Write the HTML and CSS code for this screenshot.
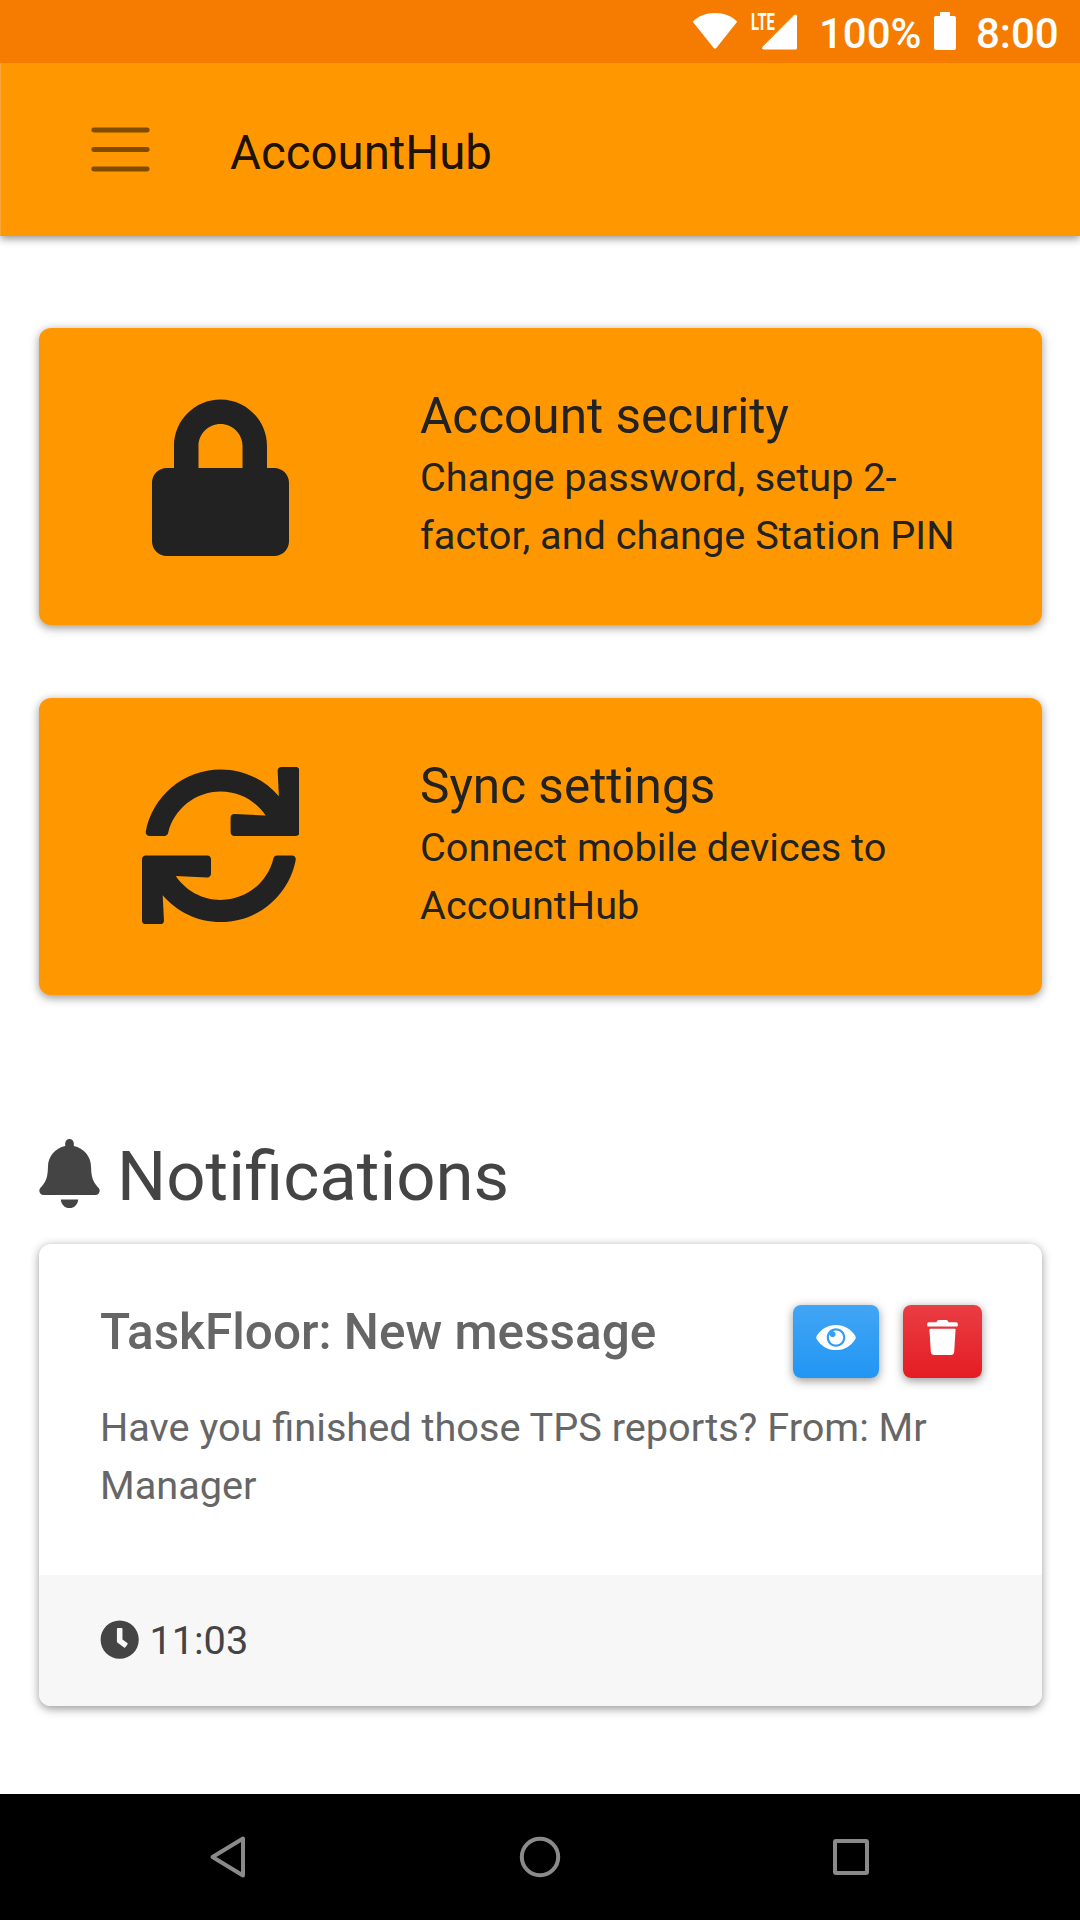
FILE: index.html
```html
<!DOCTYPE html>
<html lang="en">
<head>
<meta charset="UTF-8">
<meta name="viewport" content="width=device-width, initial-scale=1.0">
<title>AccountHub</title>
<link rel="stylesheet" href="styles.css">
</head>
<body>

<div class="statusbar">
  <svg class="wifi" viewBox="0 0 46 36"><path d="M.8 8.800C6 3 14 0 23 0s17 3 22.200 8.800L24.300 35q-1.300 1.500-2.600 0z"/></svg>
  <svg class="signal" viewBox="0 0 46 43">
    <text x="0" y="23" textLength="24" lengthAdjust="spacingAndGlyphs">LTE</text>
    <path d="M13 42.500q-3.200-.4-1.200-3L43 8.200q2.600-1.700 3 1V41q0 1.500-1.500 1.500z"/>
  </svg>
  <span class="percent">100%</span>
  <svg class="battery" viewBox="0 0 22 38"><path d="M6 0h10v4h4q2 0 2 2v30q0 2-2 2H2q-2 0-2-2V6q0-2 2-2h4z"/></svg>
  <span class="clock">8:00</span>
</div>

<nav class="navbar">
  <svg class="toggler" viewBox="0 0 30 30"><path d="M4 7h22M4 15h22M4 23h22"/></svg>
  <span class="brand">AccountHub</span>
</nav>

<main class="content">
  <a class="tile">
    <div class="tile-icon">
      <svg class="lock" viewBox="0 0 448 512"><path d="M400 224h-24v-72C376 68.200 307.800 0 224 0S72 68.200 72 152v72H48c-26.500 0-48 21.500-48 48v192c0 26.500 21.500 48 48 48h352c26.500 0 48-21.500 48-48V272c0-26.500-21.500-48-48-48zm-104 0H152v-72c0-39.700 32.300-72 72-72s72 32.300 72 72v72z"/></svg>
    </div>
    <div class="tile-text">
      <h4>Account security</h4>
      <p>Change password, setup 2-factor, and change Station PIN</p>
    </div>
  </a>

  <a class="tile">
    <div class="tile-icon">
      <svg class="sync" viewBox="0 0 512 512"><path d="M440.935 12.574l3.966 82.766C399.416 41.904 331.674 8 256 8 134.813 8 33.933 94.924 12.296 209.824 10.908 217.193 16.604 224 24.103 224h49.084c5.570 0 10.377-3.842 11.676-9.259C103.407 137.408 172.931 80 256 80c60.893 0 114.512 30.856 146.104 77.801l-101.530-4.865c-6.845-.328-12.574 5.133-12.574 11.986v47.411c0 6.627 5.373 12 12 12h200.333c6.627 0 12-5.373 12-12V12c0-6.627-5.373-12-12-12h-47.411c-6.853 0-12.315 5.729-11.987 12.574zM256 432c-60.895 0-114.517-30.858-146.109-77.805l101.868 4.871c6.845.327 12.573-5.134 12.573-11.986v-47.412c0-6.627-5.373-12-12-12H12c-6.627 0-12 5.373-12 12V500c0 6.627 5.373 12 12 12h47.385c6.863 0 12.328-5.745 11.985-12.599l-4.129-82.575C112.725 470.166 180.405 504 256 504c121.187 0 222.067-86.924 243.704-201.824 1.388-7.369-4.308-14.176-11.807-14.176h-49.084c-5.570 0-10.377 3.842-11.676 9.259C408.593 374.592 339.069 432 256 432z"/></svg>
    </div>
    <div class="tile-text">
      <h4>Sync settings</h4>
      <p>Connect mobile devices to AccountHub</p>
    </div>
  </a>

  <h2 class="heading">
    <svg class="bell" viewBox="0 0 448 512"><path d="M224 512c35.320 0 63.970-28.650 63.970-64H160.030c0 35.350 28.650 64 63.970 64zm215.390-149.710c-19.320-20.760-55.470-51.990-55.470-154.290 0-77.700-54.480-139.900-127.940-155.160V32c0-17.670-14.320-32-31.980-32s-31.980 14.330-31.980 32v20.840C118.560 68.100 64.080 130.300 64.080 208c0 102.300-36.150 133.530-55.470 154.290-6 6.450-8.660 14.160-8.610 21.710.11 16.400 12.980 32 32.100 32h383.800c19.120 0 32-15.600 32.100-32 .05-7.550-2.610-15.270-8.610-21.710z"/></svg>
    <span>Notifications</span>
  </h2>

  <div class="card">
    <div class="card-body">
      <div class="card-top">
        <h5>TaskFloor: New message</h5>
        <div class="buttons">
          <button class="btn btn-info"><svg class="eye" viewBox="0 0 576 512"><path d="M569.354 231.631C512.969 135.949 407.810 72 288 72 168.140 72 63.004 135.994 6.646 231.631a47.999 47.999 0 0 0 0 48.739C63.031 376.051 168.190 440 288 440c119.860 0 224.996-63.994 281.354-159.631a47.997 47.997 0 0 0 0-48.738zM288 392c-75.162 0-136-60.827-136-136 0-75.162 60.826-136 136-136 75.162 0 136 60.826 136 136 0 75.162-60.826 136-136 136zm104-136c0 57.438-46.562 104-104 104s-104-46.562-104-104c0-17.708 4.431-34.379 12.236-48.973l-.001.032c0 23.651 19.173 42.823 42.824 42.823s42.824-19.173 42.824-42.823c0-23.651-19.173-42.824-42.824-42.824l-.032.001C253.621 156.431 270.292 152 288 152c57.438 0 104 46.562 104 104z"/></svg></button>
          <button class="btn btn-danger"><svg class="trash" viewBox="0 0 448 512"><path d="M0 84V56c0-13.300 10.700-24 24-24h112l9.400-18.700c4-8.200 12.300-13.300 21.400-13.300h114.300c9.100 0 17.400 5.100 21.500 13.300L312 32h112c13.300 0 24 10.700 24 24v28c0 6.600-5.400 12-12 12H12C5.400 96 0 90.600 0 84zm415.200 56.700L394.800 467c-1.600 25.300-22.600 45-47.900 45H101.100c-25.300 0-46.300-19.700-47.900-45L32.800 140.700C32.400 133.800 37.900 128 44.800 128h358.500c6.800 0 12.300 5.800 11.900 12.700z"/></svg></button>
        </div>
      </div>
      <p class="card-text">Have you finished those TPS reports? From: Mr Manager</p>
    </div>
    <div class="card-footer">
      <svg class="time" viewBox="0 0 512 512"><path d="M256 8C119 8 8 119 8 256s111 248 248 248 248-111 248-248S393 8 256 8zm57.100 350.100L224.900 294c-3.100-2.300-4.900-5.900-4.900-9.700V116c0-6.600 5.400-12 12-12h48c6.600 0 12 5.400 12 12v137.700l63.500 46.200c5.400 3.900 6.500 11.400 2.600 16.800l-28.200 38.800c-3.900 5.300-11.400 6.500-16.800 2.600z"/></svg>
      <span>11:03</span>
    </div>
  </div>
</main>

<footer class="softkeys">
  <svg viewBox="0 0 48 48"><path d="M38 5.500v37L7.500 24z"/></svg>
  <svg viewBox="0 0 48 48"><circle cx="24" cy="24" r="18.200"/></svg>
  <svg viewBox="0 0 48 48"><rect x="8" y="8" width="32" height="32" rx="1"/></svg>
</footer>

</body>
</html>
```
FILE: styles.css
```css
* {
  box-sizing: border-box;
}
body {
  margin: 0;
  width: 1080px;
  height: 1920px;
  display: flex;
  flex-direction: column;
  overflow: hidden;
  background: #fff;
  color: #444;
  font-family: Roboto, sans-serif;
  font-size: 39.700px;
  line-height: 58px;
}
h2, h4, h5, p {
  margin: 0;
  font-weight: 400;
}
svg {
  display: block;
  flex: none;
  fill: currentColor;
}

/* Android status bar */
.statusbar {
  position: relative;
  z-index: 1; /* keeps the app bar's shadow off it */
  flex: none;
  display: flex;
  height: 63px;
  padding-left: 692px;
  background: #f57c00;
  color: #fff;
  font-size: 42px;
  font-weight: 500;
  line-height: 68px;
}
.wifi {
  width: 46px;
  height: 36px;
  margin-top: 13px;
}
.signal {
  width: 46px;
  height: 43px;
  margin: 7px 0 0 13px;
  overflow: visible;
}
.signal text {
  font-size: 23px;
  font-weight: 700;
}
.percent {
  width: 102px;
  margin-left: 22px;
}
.battery {
  width: 22px;
  height: 38px;
  margin: 12px 0 0 13px;
}
.clock {
  margin-left: 20px;
}

/* App bar */
.navbar {
  flex: none;
  display: flex;
  align-items: center;
  height: 173px;
  padding-left: 83px;
  background: #ff9800;
  border-left: 1px solid #f6a63b;
  box-shadow: 0 2.600px 8px rgba(0, 0, 0, 0.4);
}
.toggler {
  width: 73px;
  height: 73px;
  fill: none;
  stroke: rgba(0, 0, 0, 0.5);
  stroke-width: 2;
  stroke-linecap: round;
}
.brand {
  margin: 6px 0 0 73px;
  color: rgba(0, 0, 0, 0.9);
  font-size: 47.400px;
}

.content {
  flex: 1;
  padding: 92px 38px 0 39px;
}

/* Menu tiles */
.tile {
  display: flex;
  height: 297px;
  margin-bottom: 73px;
  border-radius: 12px;
  background: #ff9800;
  color: #222;
  box-shadow: 0 2.600px 10px rgba(0, 0, 0, 0.4);
}
.tile-icon {
  width: 363px;
  display: flex;
  justify-content: center;
  padding-top: 71px;
}
.lock {
  width: 137px;
  height: 157.500px;
}
.sync {
  width: 157.500px;
  height: 157.500px;
  margin-top: -2.500px;
}
.tile-text {
  width: 560px;
  margin-left: 18px;
  padding-top: 59px;
}
.tile-text h4 {
  margin-bottom: 4px;
  font-size: 49.500px;
}

/* Notifications */
.heading {
  display: flex;
  align-items: center;
  gap: 17px;
  height: 83px;
  margin-top: 137px;
  font-size: 69px;
  line-height: 83px;
}
.heading span {
  padding-top: 5px;
}
.bell {
  width: 61px;
  height: 69px;
}
.card {
  margin-top: 29px;
  border-radius: 12px;
  overflow: hidden;
  color: #666;
  box-shadow: 0 2.600px 10px rgba(0, 0, 0, 0.4);
}
.card-body {
  height: 331px;
  padding: 61px 60px 0 61px;
}
.card-top {
  display: flex;
  justify-content: space-between;
  height: 94px;
}
.card-top h5 {
  margin-top: -2px;
  font-size: 49.500px;
  font-weight: 500;
}
.buttons {
  display: flex;
  gap: 24px;
}
.btn {
  display: flex;
  justify-content: center;
  height: 73px;
  padding: 15px 0 0;
  border: 0;
  border-radius: 8px;
  color: #fff;
  box-shadow: 0 2.600px 10px rgba(0, 0, 0, 0.4);
}
.btn-info {
  width: 86px;
  background: linear-gradient(#42a5f5, #2196f3);
}
.btn-danger {
  width: 79px;
  background: linear-gradient(#ea3d44, #e51c23);
}
.eye {
  width: 40px;
  height: 35px;
}
.trash {
  width: 31px;
  height: 35px;
}
.card-footer {
  display: flex;
  align-items: center;
  gap: 10px;
  height: 131px;
  padding: 0 61px;
  background: #f7f7f7;
  color: #444;
}
.time {
  width: 39.400px;
  height: 39.400px;
  margin-bottom: 2px;
}

/* Android soft keys */
.softkeys {
  flex: none;
  display: flex;
  align-items: center;
  justify-content: space-between;
  height: 126px;
  padding: 0 205px;
  background: #000;
}
.softkeys svg {
  width: 48px;
  height: 48px;
  fill: none;
  stroke: #8a8a8a;
  stroke-width: 4;
  stroke-linejoin: round;
}
```
